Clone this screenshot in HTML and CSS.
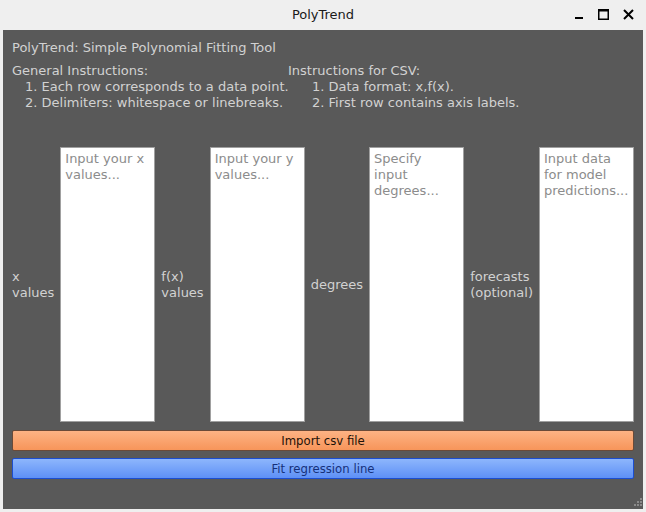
FILE: index.html
```html
<!DOCTYPE html>
<html>
<head>
<meta charset="utf-8">
<link rel="stylesheet" href="styles.css">
</head>
<body>
<div class="titlebar">
  <span class="title">PolyTrend</span>
  <div class="controls">
    <svg width="10" height="10" viewBox="0 0 10 10"><rect x="1" y="7" width="8" height="2" fill="#000"/></svg>
    <svg width="11" height="11" viewBox="0 0 11 11"><rect x="0.75" y="0.75" width="9.5" height="9.5" fill="none" stroke="#000" stroke-width="1.5"/><rect x="0" y="0" width="11" height="2.5" fill="#000"/></svg>
    <svg width="11" height="11" viewBox="0 0 11 11"><path d="M1 1 L10 10 M10 1 L1 10" stroke="#000" stroke-width="2"/></svg>
  </div>
</div>
<div class="window">
  <div class="heading">PolyTrend: Simple Polynomial Fitting Tool</div>
  <div class="instructions">
    <div class="col">
      <div>General Instructions:</div>
      <div class="item">1. Each row corresponds to a data point.</div>
      <div class="item">2. Delimiters: whitespace or linebreaks.</div>
    </div>
    <div class="col">
      <div>Instructions for CSV:</div>
      <div class="item">1. Data format: x,f(x).</div>
      <div class="item">2. First row contains axis labels.</div>
    </div>
  </div>
  <div class="inputs">
    <label class="lbl">x<br>values</label>
    <textarea class="box" placeholder="Input your x&#10;values..."></textarea>
    <label class="lbl">f(x)<br>values</label>
    <textarea class="box" placeholder="Input your y&#10;values..."></textarea>
    <label class="lbl">degrees</label>
    <textarea class="box" placeholder="Specify&#10;input&#10;degrees..."></textarea>
    <label class="lbl">forecasts<br>(optional)</label>
    <textarea class="box" placeholder="Input data&#10;for model&#10;predictions..."></textarea>
  </div>
  <button class="btn orange">Import csv file</button>
  <button class="btn blue">Fit regression line</button>
  <div class="grip">
    <svg width="10" height="10" viewBox="0 0 10 10" fill="#8a8a8a">
      <rect x="8" y="0" width="2" height="2"/>
      <rect x="5" y="3" width="2" height="2"/><rect x="8" y="3" width="2" height="2"/>
      <rect x="2" y="6" width="2" height="2"/><rect x="5" y="6" width="2" height="2"/><rect x="8" y="6" width="2" height="2"/>
    </svg>
  </div>
</div>
</body>
</html>
```
FILE: styles.css
```css
html, body {
  margin: 0;
  padding: 0;
}
body {
  background: #efefef;
  font-family: "DejaVu Sans", sans-serif;
  font-size: 13px;
  width: 646px;
  height: 512px;
  overflow: hidden;
}
.titlebar {
  height: 30px;
  position: relative;
  display: flex;
  align-items: center;
  justify-content: center;
}
.title {
  font-size: 13px;
  color: #1a1a1a;
  margin-top: -2px;
}
.controls {
  position: absolute;
  right: 12px;
  top: 9px;
  display: flex;
  gap: 14px;
  align-items: flex-end;
}
.window {
  position: relative;
  margin: 0 3px;
  height: 479px;
  background: #595959;
  color: #d2d2d2;
  padding: 10px 9px 0 9px;
  box-sizing: border-box;
  line-height: 16px;
}
.heading {
  margin-bottom: 7px;
}
.instructions {
  display: flex;
  white-space: nowrap;
}
.instructions .col:first-child {
  width: 276px;
}
.item {
  padding-left: 13px;
}
.instructions .col:last-child .item {
  padding-left: 24px;
}
.inputs {
  display: flex;
  align-items: center;
  gap: 6px;
  margin-top: 36px;
  height: 275px;
}
.lbl {
  color: #d2d2d2;
  white-space: nowrap;
}
.box {
  flex: 1;
  align-self: stretch;
  margin: 0;
  resize: none;
  border: 1px solid #a0a0a0;
  background: #fff;
  font-family: "DejaVu Sans", sans-serif;
  font-size: 13px;
  line-height: 16px;
  padding: 3px 2px 3px 4px;
  box-sizing: border-box;
  color: #222;
  outline: none;
  overflow: hidden;
}
.box::placeholder {
  color: #8c8c8c;
  opacity: 1;
}
.btn {
  display: block;
  width: 100%;
  height: 21px;
  margin: 7px 0 0 0;
  padding: 0;
  border-radius: 2px;
  font-family: "DejaVu Sans Condensed", "DejaVu Sans", sans-serif;
  font-size: 13px;
  line-height: 18px;
}
.orange {
  margin-top: 8px;
  background: linear-gradient(#fdb384, #f7955a);
  border: 1px solid #6a4a38;
  color: #1e1208;
}
.blue {
  background: linear-gradient(#8db6fc, #5e90f6);
  border: 1px solid #1c4ed0;
  color: #15307a;
}
.grip {
  position: absolute;
  right: 1px;
  bottom: 1px;
  line-height: 0;
}
```
